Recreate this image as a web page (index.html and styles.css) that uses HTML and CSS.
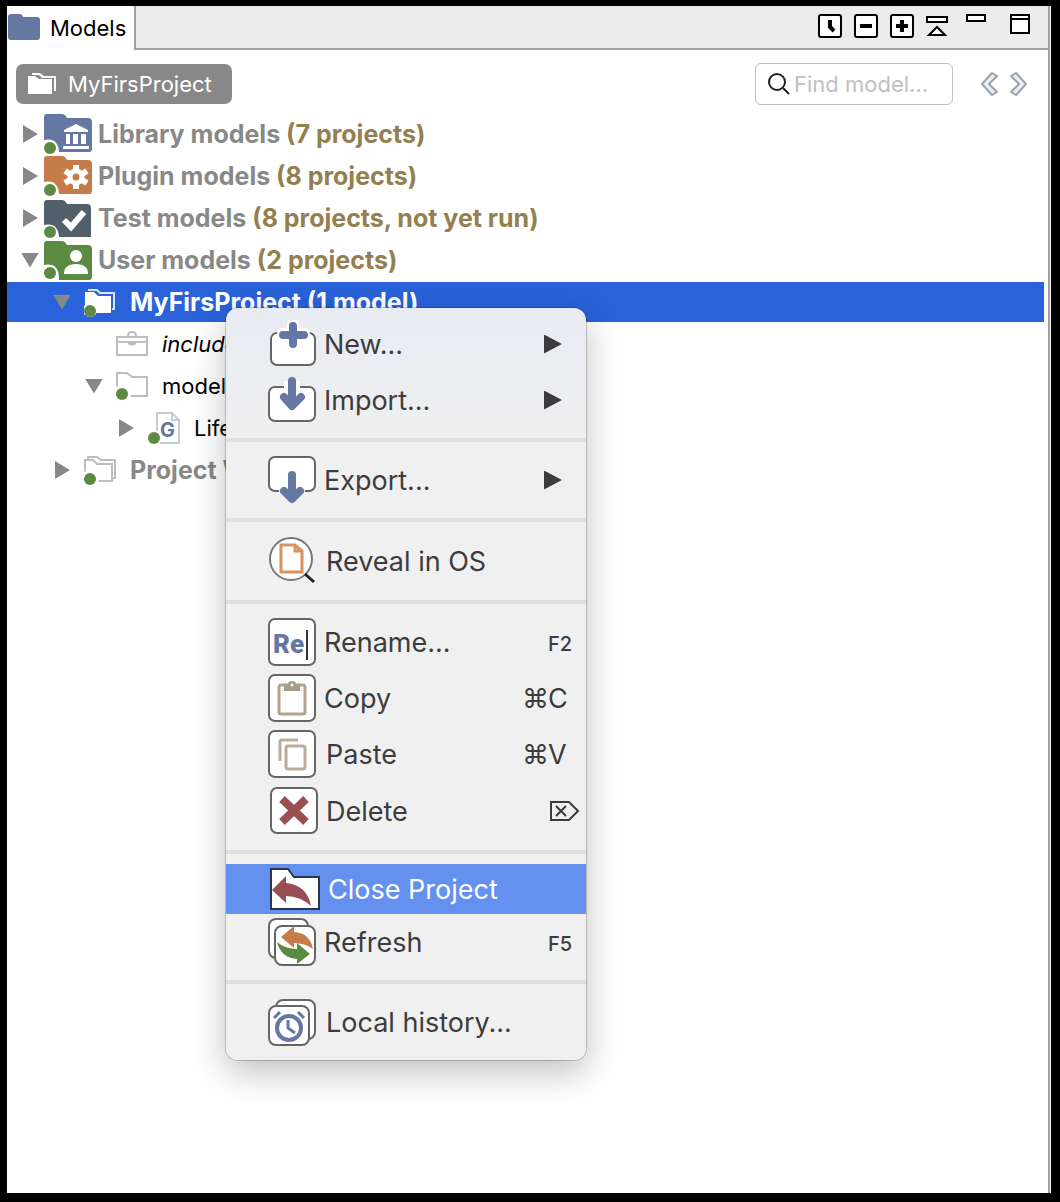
FILE: index.html
```html
<!DOCTYPE html>
<html lang="en">
<head>
<meta charset="utf-8">
<meta name="viewport" content="width=device-width, initial-scale=1">
<title>Models</title>
<link rel="stylesheet" href="styles.css">
</head>
<body>
<main class="panel">
  <header class="tabbar">
    <h1 class="tab">
      <svg width="34" height="28" viewBox="0 0 34 28" aria-hidden="true"><path fill="#6478a3" d="M1 3q0-3 3-3h9q2 0 3 3h14q3 0 3 3v17q0 3-3 3H4q-3 0-3-3z"/></svg>
      Models
    </h1>
    <div class="tools">
      <button class="tool" type="button" aria-label="History"><svg width="24" height="24" viewBox="0 0 24 24"><rect x="1" y="1" width="22" height="22" rx="2" fill="#fff" stroke="#000" stroke-width="2"/><path d="M12 6v7l4 4" fill="none" stroke="#000" stroke-width="4"/></svg></button>
      <button class="tool" type="button" aria-label="Collapse"><svg width="24" height="24" viewBox="0 0 24 24"><rect x="1" y="1" width="22" height="22" rx="2" fill="#fff" stroke="#000" stroke-width="2"/><path d="M6 12h12" stroke="#000" stroke-width="4"/></svg></button>
      <button class="tool" type="button" aria-label="Expand"><svg width="24" height="24" viewBox="0 0 24 24"><rect x="1" y="1" width="22" height="22" rx="2" fill="#fff" stroke="#000" stroke-width="2"/><path d="M6 12h12M12 6v12" stroke="#000" stroke-width="4"/></svg></button>
      <button class="tool" type="button" aria-label="Link with editor"><svg width="24" height="24" viewBox="0 0 24 24"><path d="M1 3h20v5H1zM3 21l8-8 8 8z" fill="#fff" stroke="#000" stroke-width="2"/></svg></button>
      <button class="tool" type="button" aria-label="Minimize"><svg width="32" height="24" viewBox="0 0 32 24"><path d="M5 1h18v6H5z" fill="#fff" stroke="#000" stroke-width="2"/></svg></button>
      <button class="tool" type="button" aria-label="Maximize"><svg width="32" height="24" viewBox="0 0 32 24"><path d="M5 1h18v18H5zM5 5h18" fill="#fff" stroke="#000" stroke-width="2"/></svg></button>
    </div>
  </header>

  <div class="filterbar">
    <button class="crumb" type="button">
      <svg width="30" height="24" viewBox="0 0 30 24" aria-hidden="true"><path fill="#fff" d="M1 4h7l4 3h13v15H1zM5 1h8l4 3h12v15h-2V6H15l-3-3H5z"/></svg>
      MyFirsProject
    </button>
    <label class="search">
      <svg width="24" height="24" viewBox="0 0 24 24" aria-hidden="true"><circle cx="10" cy="10" r="8" fill="none" stroke="#222" stroke-width="2"/><path d="M16 16l6 6" stroke="#222" stroke-width="2"/></svg>
      <input type="text" placeholder="Find model..." aria-label="Find model">
    </label>
    <div class="nav">
      <button class="tool" type="button" aria-label="Previous"><svg width="18" height="26" viewBox="0 0 18 26"><path d="M12 2L2 13l10 11 5-3-8-8 8-8z" fill="#eceef1" stroke="#9aa2ac" stroke-width="2" stroke-linejoin="round"/></svg></button>
      <button class="tool" type="button" aria-label="Next"><svg width="18" height="26" viewBox="0 0 18 26"><path d="M6 2l10 11L6 24l-5-3 8-8-8-8z" fill="#eceef1" stroke="#9aa2ac" stroke-width="2" stroke-linejoin="round"/></svg></button>
    </div>
  </div>

  <ul class="tree" role="tree">
    <li role="treeitem" aria-expanded="false">
      <div class="row root">
        <button class="twist" type="button" aria-label="Expand Library models"></button>
        <svg width="48" height="40" viewBox="0 0 48 40" aria-hidden="true"><path fill="#6478a3" d="M0 3q0-3 3-3h15q3 0 5 4h21q4 0 4 4v27q0 3-3 3H0z"/><path fill="#fff" d="M0 40V26q14-3 15 12v2z"/><circle cx="6" cy="34" r="6" fill="#5c8a43"/><path fill="#fff" d="M32 10l12 6v2H20v-2zM22 20h4v10h-4zM29 20h5v10h-5zM37 20h5v10h-5zM19 32h26v3H19z"/></svg>
        <span class="name">Library models <em>(7 projects)</em></span>
      </div>
    </li>
    <li role="treeitem" aria-expanded="false">
      <div class="row root">
        <button class="twist" type="button" aria-label="Expand Plugin models"></button>
        <svg width="48" height="40" viewBox="0 0 48 40" aria-hidden="true"><path fill="#c67c48" d="M0 3q0-3 3-3h15q3 0 5 4h21q4 0 4 4v27q0 3-3 3H0z"/><path fill="#fff" d="M0 40V26q14-3 15 12v2z"/><circle cx="6" cy="34" r="6" fill="#5c8a43"/><circle cx="32" cy="21" r="6" fill="none" stroke="#fff" stroke-width="5"/><path stroke="#fff" stroke-width="6" d="M32 9v5M32 28v5M21 15l5 3M38 24l5 3M21 27l5-3M38 18l5-3"/></svg>
        <span class="name">Plugin models <em>(8 projects)</em></span>
      </div>
    </li>
    <li role="treeitem" aria-expanded="false">
      <div class="row root">
        <button class="twist" type="button" aria-label="Expand Test models"></button>
        <svg width="48" height="40" viewBox="0 0 48 40" aria-hidden="true"><path fill="#535f6b" d="M0 5q0-3 3-3h15q3 0 5 4h20q4 0 4 4v29H0z"/><path fill="#fff" d="M0 40V27q14-3 15 12v1z"/><circle cx="6" cy="34" r="6" fill="#5c8a43"/><path fill="none" stroke="#fff" stroke-width="6" d="M20 22l7 7 13-15"/></svg>
        <span class="name">Test models <em>(8 projects, not yet run)</em></span>
      </div>
    </li>
    <li role="treeitem" aria-expanded="true">
      <div class="row root">
        <button class="twist open" type="button" aria-label="Collapse User models"></button>
        <svg width="48" height="40" viewBox="0 0 48 40" aria-hidden="true"><path fill="#5c8a43" d="M0 4q0-3 3-3h15q3 0 5 4h21q4 0 4 4v27q0 4-3 4H0z"/><path fill="#fff" d="M0 40V25q14-3 15 12v3z"/><circle cx="6" cy="33" r="6" fill="#5c8a43"/><circle cx="32" cy="16" r="6" fill="#fff"/><path fill="#fff" d="M20 34q0-10 12-10t12 10z"/></svg>
        <span class="name">User models <em>(2 projects)</em></span>
      </div>
      <ul role="group">
        <li role="treeitem" aria-expanded="true" aria-selected="true">
          <div class="row level1 selected">
            <button class="twist open" type="button" aria-label="Collapse MyFirsProject"></button>
            <svg width="32" height="30" viewBox="0 0 32 30" aria-hidden="true"><path fill="#fff" d="M1 5h9l4 4h13v17H1z"/><path fill="none" stroke="#d9e2f5" stroke-width="2" d="M4 3h9l3 3h14v16h-2"/><circle cx="6" cy="23" r="7" fill="#fff"/><circle cx="6" cy="24" r="6" fill="#5c8a43"/></svg>
            <span class="name">MyFirsProject (1 model)</span>
          </div>
          <ul role="group">
            <li role="treeitem">
              <div class="row level2">
                <span class="twist none"></span>
                <svg width="32" height="26" viewBox="0 0 32 26" aria-hidden="true"><path fill="#fff" stroke="#bdbdbd" stroke-width="2" d="M1 6h30v18H1zM1 11h30M12 5q0-4 4-4t4 4"/><path d="M12 11h8v2q-4 3-8 0z" fill="#bdbdbd"/></svg>
                <span class="name italic">include</span>
              </div>
            </li>
            <li role="treeitem" aria-expanded="true">
              <div class="row level2">
                <button class="twist open" type="button" aria-label="Collapse models"></button>
                <svg width="32" height="28" viewBox="0 0 32 28" aria-hidden="true"><path fill="#fff" stroke="#bdbdbd" stroke-width="2" d="M1 1h10l5 4h15v19H1z"/><circle cx="6" cy="22" r="9" fill="#fff"/><circle cx="6" cy="22" r="6" fill="#5c8a43"/></svg>
                <span class="name">models</span>
              </div>
              <ul role="group">
                <li role="treeitem" aria-expanded="false">
                  <div class="row level3">
                    <button class="twist" type="button" aria-label="Expand Life"></button>
                    <svg width="32" height="32" viewBox="0 0 32 32" aria-hidden="true"><path fill="#fff" stroke="#c4cbd4" stroke-width="2" d="M9 1h15l7 7v23H9zM24 1v7h7"/><circle cx="6" cy="26" r="8" fill="#fff"/><circle cx="6" cy="26" r="6" fill="#5c8a43"/><text class="glyph" x="12" y="25">G</text></svg>
                    <span class="name">Life</span>
                  </div>
                </li>
              </ul>
            </li>
          </ul>
        </li>
        <li role="treeitem" aria-expanded="false">
          <div class="row level1 muted">
            <button class="twist" type="button" aria-label="Expand Project W"></button>
            <svg width="32" height="30" viewBox="0 0 32 30" aria-hidden="true"><path fill="#fff" stroke="#bdbdbd" stroke-width="2" d="M4 5V2h9l4 3h14v18h-3M1 5h8l4 4h15v17H1z"/><circle cx="6" cy="24" r="9" fill="#fff"/><circle cx="6" cy="24" r="6" fill="#5c8a43"/></svg>
            <span class="name">Project W</span>
          </div>
        </li>
      </ul>
    </li>
  </ul>

  <div class="menu" role="menu">
    <button class="item" role="menuitem" type="button">
      <svg width="48" height="48" viewBox="0 0 48 48"><rect x="3" y="13" width="44" height="32" rx="6" fill="#fff" stroke="#666" stroke-width="2"/><path d="M10 9h31v4H10z" fill="#ebedf2"/><path d="M25 4v20M15 14h21" stroke="#fff" stroke-width="12" stroke-linecap="round"/><path d="M25 6v18M15 15h21" stroke="#6478a3" stroke-width="8" stroke-linecap="round"/></svg>
      <span class="label">New...</span><span class="arrow"></span>
    </button>
    <button class="item" role="menuitem" type="button">
      <svg width="48" height="48" viewBox="0 0 48 48"><rect x="1" y="11" width="46" height="34" rx="6" fill="#fff" stroke="#666" stroke-width="2"/><path d="M24 5v10" stroke="#fff" stroke-width="16"/><path d="M24 5v22M16 21l8 9 9-9" fill="none" stroke="#6478a3" stroke-width="8" stroke-linecap="round" stroke-linejoin="round"/></svg>
      <span class="label">Import...</span><span class="arrow"></span>
    </button>
    <hr class="sep">
    <button class="item" role="menuitem" type="button">
      <svg width="48" height="48" viewBox="0 0 48 48"><rect x="1" y="1" width="46" height="34" rx="6" fill="#fff" stroke="#666" stroke-width="2"/><path d="M11 33h26v4H11z" fill="#f5f5f5"/><path d="M24 19v22M16 35l8 8 8-8" fill="none" stroke="#6478a3" stroke-width="8" stroke-linecap="round" stroke-linejoin="round"/></svg>
      <span class="label">Export...</span><span class="arrow"></span>
    </button>
    <hr class="sep">
    <button class="item tall" role="menuitem" type="button">
      <svg width="48" height="48" viewBox="0 0 48 48"><circle cx="23" cy="22" r="21" fill="#fff" stroke="#777" stroke-width="2"/><path d="M37 37l9 8" stroke="#222" stroke-width="3"/><path d="M13 8h14l7 6v21H13zM27 8v6h7" fill="#fff" stroke="#d5935f" stroke-width="3"/></svg>
      <span class="label wide">Reveal in OS</span>
    </button>
    <hr class="sep">
    <button class="item" role="menuitem" type="button">
      <svg width="48" height="48" viewBox="0 0 48 48"><rect x="1" y="1" width="46" height="46" rx="6" fill="#fff" stroke="#666" stroke-width="2"/><text class="rename-glyph" x="5" y="35">Re</text><path d="M39 12v30" stroke="#333" stroke-width="2"/></svg>
      <span class="label">Rename...</span><kbd class="keys small"><span></span><span>F2</span></kbd>
    </button>
    <button class="item" role="menuitem" type="button">
      <svg width="48" height="48" viewBox="0 0 48 48"><rect x="1" y="1" width="46" height="46" rx="6" fill="#fff" stroke="#666" stroke-width="2"/><rect x="11" y="11" width="26" height="29" rx="2" fill="#fff" stroke="#b0a48f" stroke-width="3"/><path d="M16 10h4q0-3 4-3t4 3h4v7H16z" fill="#a89c87"/><circle cx="24" cy="11" r="1.500" fill="#fff"/></svg>
      <span class="label">Copy</span><kbd class="keys"><span>⌘</span><span>C</span></kbd>
    </button>
    <button class="item" role="menuitem" type="button">
      <svg width="48" height="48" viewBox="0 0 48 48"><rect x="1" y="1" width="46" height="46" rx="6" fill="#fff" stroke="#666" stroke-width="2"/><path d="M12 31V12q0-2 2-2h16" fill="none" stroke="#b9ad9a" stroke-width="3"/><rect x="18" y="16" width="19" height="23" rx="2" fill="#fff" stroke="#b9ad9a" stroke-width="3"/></svg>
      <span class="label wide">Paste</span><kbd class="keys"><span>⌘</span><span>V</span></kbd>
    </button>
    <button class="item tall" role="menuitem" type="button">
      <svg width="50" height="48" viewBox="0 0 50 48"><rect x="3" y="1" width="46" height="45" rx="6" fill="#fff" stroke="#666" stroke-width="2"/><path d="M14 12l24 23M38 12L14 35" stroke="#9a4f50" stroke-width="8"/></svg>
      <span class="label">Delete</span><kbd class="keys"><span></span><span><svg width="32" height="22" viewBox="0 0 32 22" role="img" aria-label="Forward delete"><path d="M3 2h18l9 9-9 9H3zM8 6l10 10M18 6L8 16" fill="none" stroke="#3c3c3e" stroke-width="2"/></svg></span></kbd>
    </button>
    <hr class="sep">
    <button class="item active" role="menuitem" type="button">
      <svg width="52" height="48" viewBox="0 0 52 48"><path d="M3 4h17l6 8h25v32H3z" fill="#fff" stroke="#2a3650" stroke-width="2"/><path d="M4 25L18 11v7q21 2 25 23-11-10-25-10v7z" fill="#964e52"/></svg>
      <span class="label">Close Project</span>
    </button>
    <button class="item" role="menuitem" type="button">
      <svg width="48" height="48" viewBox="0 0 48 48"><rect x="1" y="1" width="39" height="39" rx="7" fill="#fff" stroke="#666" stroke-width="2"/><rect x="7" y="8" width="40" height="39" rx="7" fill="#fff" stroke="#666" stroke-width="2"/><path d="M13 19L26 8v6q16 1 19 17-8-6-19-6v5z" fill="#c67c48"/><path d="M42 36L29 46v-5Q13 40 9 24q8 7 20 7v-6z" fill="#5c8a43"/></svg>
      <span class="label">Refresh</span><kbd class="keys small"><span></span><span>F5</span></kbd>
    </button>
    <hr class="sep">
    <button class="item" role="menuitem" type="button">
      <svg width="48" height="48" viewBox="0 0 48 48"><rect x="8" y="2" width="39" height="39" rx="7" fill="#fff" stroke="#666" stroke-width="2"/><rect x="1" y="8" width="40" height="39" rx="7" fill="#fff" stroke="#666" stroke-width="2"/><circle cx="21" cy="30" r="12" fill="none" stroke="#6478a3" stroke-width="4"/><path d="M20 22v8l7 5M6 20l6-6M30 14l6 6" fill="none" stroke="#6478a3" stroke-width="3"/></svg>
      <span class="label wide">Local history...</span>
    </button>
  </div>
</main>
</body>
</html>
```
FILE: styles.css
```css
* { box-sizing: border-box; }
body {
  margin: 0;
  min-height: 100vh;
  display: flex;
  padding: 6px 9px 9px 7px;
  background: #000;
  font-family: Inter, "Liberation Sans", sans-serif;
  font-size: 22px;
  color: #000;
}
button, input {
  font: inherit;
  color: inherit;
  border: 0;
  padding: 0;
  background: none;
}
svg { display: block; flex: none; }
ul { list-style: none; margin: 0; padding: 0; }

.panel {
  position: relative;
  flex: 1;
  background: #fff;
  border-right: 1px solid #fff;
  box-shadow: inset -2px 0 #a0a0a0;
  padding-right: 2px;
}

.tabbar { display: flex; height: 44px; }
.tab {
  display: flex;
  align-items: center;
  gap: 9px;
  margin: 0;
  padding-right: 8px;
  border-right: 2px solid #a0a0a0;
  font-size: 22px;
  font-weight: 400;
}
.tools {
  flex: 1;
  display: flex;
  justify-content: flex-end;
  align-items: flex-start;
  gap: 12px;
  padding: 8px 10px 0 0;
  background: #ebebeb;
  border-bottom: 2px solid #a0a0a0;
}

.filterbar {
  display: flex;
  align-items: center;
  padding: 13px 20px 7px 9px;
}
.crumb {
  display: flex;
  align-items: center;
  gap: 11px;
  height: 40px;
  padding: 0 20px 0 11px;
  border-radius: 7px;
  background: #888;
  color: #fff;
}
.search {
  display: flex;
  align-items: center;
  gap: 3px;
  width: 198px;
  height: 42px;
  margin-left: auto;
  padding: 0 11px;
  border: 1px solid #c0c0c0;
  border-radius: 6px;
}
.search input { min-width: 0; width: 100%; outline: 0; }
.search input::placeholder { color: #bfbfbf; opacity: 1; }
.nav { display: flex; gap: 12px; margin-left: 27px; }

.row {
  display: flex;
  align-items: center;
  height: 40px;
  margin: 2px 4px 0 0;
  padding-left: 13px;
  white-space: nowrap;
}
.root, .level1 { font-size: 25px; font-weight: 700; line-height: 38px; }
.root { color: #888; }
.root .name { margin-left: 6px; }
.name { padding-bottom: 1px; }
.root em { font-style: normal; color: #94804f; }
.level1 { padding-left: 45px; }
.level2 { padding-left: 77px; }
.level3 { padding-left: 109px; }
.level1 .twist, .level2 .twist, .level3 .twist { margin-right: 12px; }
.level1 .name, .level2 .name, .level3 .name { margin-left: 14px; }
.selected { background: #2962d9; color: #fff; }
.muted { color: #888; }
.italic { font-style: italic; }
.twist {
  flex: none;
  width: 20px;
  height: 20px;
  margin-right: 4px;
}
.twist::before {
  content: "";
  display: block;
  width: 15px;
  height: 18px;
  margin-left: 3px;
  background: #888;
  clip-path: polygon(0 0, 100% 50%, 0 100%);
}
.twist.open::before {
  width: 18px;
  height: 15px;
  margin-left: 1px;
  clip-path: polygon(0 0, 100% 0, 50% 100%);
}
.twist.none { visibility: hidden; }
.glyph { font-size: 20px; font-weight: 700; fill: #6478a3; }

.menu {
  position: absolute;
  left: 219px;
  top: 302px;
  width: 360px;
  padding: 8px 0 10px;
  overflow: hidden;
  border-radius: 12px;
  background: linear-gradient(#e8ebf2, #f0f0f0 140px);
  box-shadow: 0 0 0 1px rgba(0, 0, 0, .2), 0 12px 36px rgba(0, 0, 0, .26);
  color: #3c3c3e;
}
.item {
  display: flex;
  align-items: center;
  gap: 8px;
  width: 100%;
  height: 56px;
  padding: 0 5px 0 42px;
  font-size: 27px;
  text-align: left;
  white-space: nowrap;
}
.tall { height: 58px; }
.active { height: 50px; background: #6491f0; color: #fff; }
.label { flex: 1; }
.wide { padding-left: 2px; }
.arrow {
  width: 18px;
  height: 19px;
  margin-right: 19px;
  background: #3c3c3e;
  clip-path: polygon(0 0, 100% 50%, 0 100%);
}
.sep { height: 4px; margin: 10px 0; border: 0; background: #dfdfdf; }
.keys {
  display: grid;
  grid-template-columns: 26px 33px;
  align-items: center;
  font-family: inherit;
  font-size: 27px;
}
.small { padding-top: 4px; font-size: 20px; font-weight: 500; }
.rename-glyph {
  font-family: Roboto, "Liberation Sans", sans-serif;
  font-size: 26px;
  font-weight: 900;
  fill: #6478a3;
}
```
